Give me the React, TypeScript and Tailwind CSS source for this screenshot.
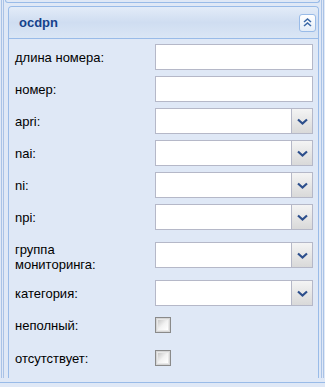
import React from 'react';

const font = "font-['Liberation_Sans',Arial,sans-serif]";

const Trigger = () => (
    <div className="w-[21px] h-full border-l border-[#b5b8c8] bg-gradient-to-b from-[#f4f4f4] to-[#d9d9d9] flex items-center justify-center">
        <svg width="11" height="7" viewBox="0 0 11 7">
            <path d="M1 1.5 L5.5 5.5 L10 1.5" fill="none" stroke="#2d4f8c" strokeWidth="2.2" />
        </svg>
    </div>
);

const TextField = () => (
    <div className="w-[158px] h-[26px] bg-white border border-[#b5b8c8]"></div>
);

const Combo = () => (
    <div className="w-[158px] h-[26px] bg-white border border-[#b5b8c8] flex justify-end">
        <Trigger />
    </div>
);

const Check = () => (
    <div className="w-[16px] h-[16px] border border-[#8a8a8a] bg-[#d6d6d6] p-[1px]">
        <div className="w-full h-full bg-gradient-to-br from-[#c8c8c8] via-[#f2f2f2] to-white border border-[#e8e8e8]"></div>
    </div>
);

const Row = ({ label, children, h = 'h-[26px]' }: { label: React.ReactNode; children: React.ReactNode; h?: string }) => (
    <div className={`flex items-center ${h}`}>
        <div className="w-[140px] text-[13px] leading-[15px] text-black">{label}</div>
        {children}
    </div>
);

const App = () => {
    return (
        <div className={`w-[325px] h-[387px] bg-[#dfe8f6] overflow-hidden ${font}`}>
            <div className="h-[378px] mx-[1px] border-x-[3px] border-double border-[#a9c2e6] flex flex-col">
                {/* bottom of the panel above */}
                <div className="h-[3px] mx-[1px] border-x border-b border-[#99bbe8] rounded-b-[3px] bg-[#dfe8f6]"></div>

                <div className="ml-[4px] mr-[2px] mt-[3px] flex-1 border-x border-t border-[#99bbe8] rounded-t-[4px] flex flex-col overflow-hidden">
                    <div className="h-[32px] shrink-0 border-b border-[#99bbe8] rounded-t-[3px] bg-gradient-to-b from-[#e3ecf8] via-[#cfddf1] to-[#dae6f5] flex items-center justify-between pl-[10px] pr-[2px]">
                        <span className="text-[13px] font-bold text-[#15428b]">ocdpn</span>
                        <div className="w-[17px] h-[18px] rounded-[3px] border border-[#99bbe8] bg-gradient-to-b from-white to-[#e4edf8] flex items-center justify-center">
                            <svg width="11" height="11" viewBox="0 0 11 11">
                                <path d="M2 5 L5.5 2 L9 5 M2 9 L5.5 6 L9 9" fill="none" stroke="#3d6aa8" strokeWidth="1.6" />
                            </svg>
                        </div>
                    </div>

                    <div className="pl-[6px] pt-[5px] flex flex-col gap-[6px]">
                        <Row label="длина номера:"><TextField /></Row>
                        <Row label="номер:"><TextField /></Row>
                        <Row label="apri:"><Combo /></Row>
                        <Row label="nai:"><Combo /></Row>
                        <Row label="ni:"><Combo /></Row>
                        <Row label="npi:"><Combo /></Row>
                        <Row label={<span className="block pt-[3px]">группа<br />мониторинга:</span>} h="h-[38px]"><Combo /></Row>
                        <Row label="категория:"><Combo /></Row>
                        <Row label="неполный:"><Check /></Row>
                        <Row label="отсутствует:" h="h-[28px]"><Check /></Row>
                    </div>
                </div>
            </div>
            <div className="mt-[4px] h-[5px] border-t border-[#99bbe8]"></div>
        </div>
    );
};

export default App;
